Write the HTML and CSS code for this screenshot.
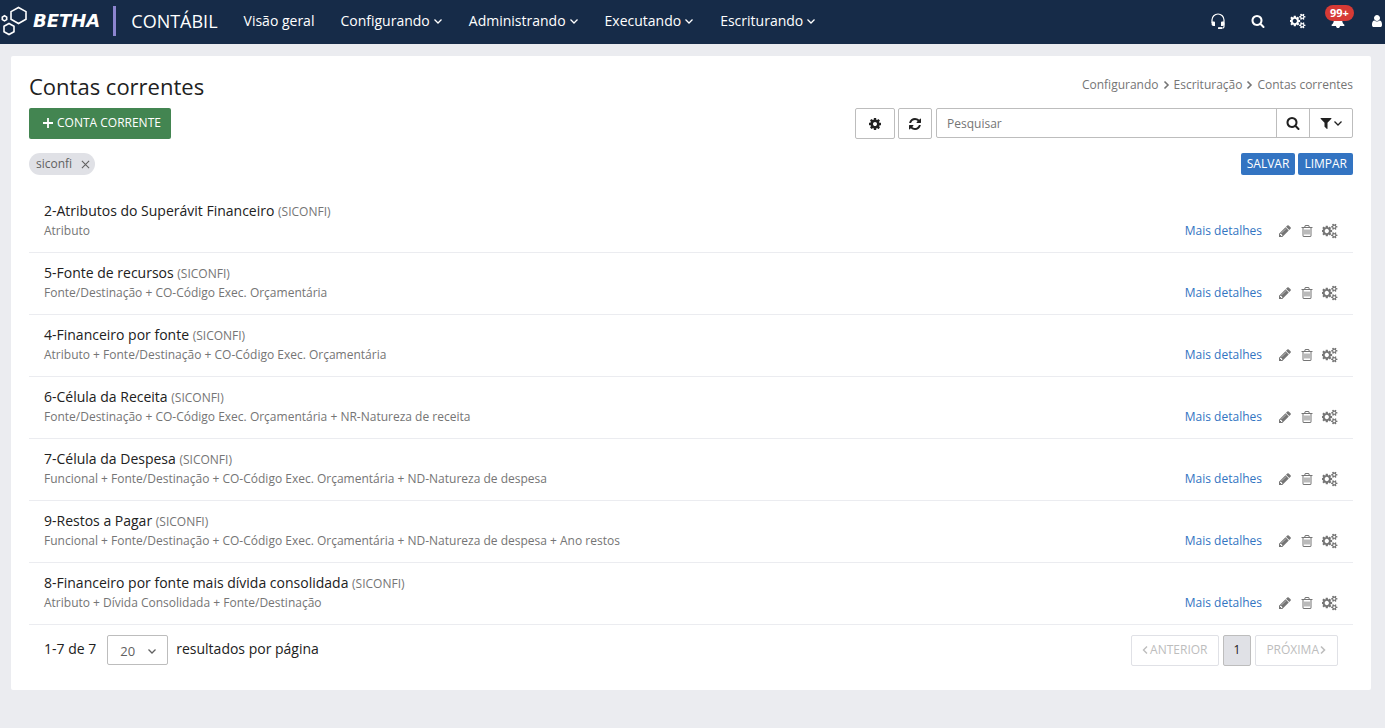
FILE: index.html
```
<!DOCTYPE html>
<html lang="pt-BR">
<head>
<meta charset="utf-8">
<meta name="viewport" content="width=device-width, initial-scale=1">
<title>Contas correntes - Contábil</title>
<link rel="stylesheet" href="styles.css">
</head>
<body>
<svg class="sprite" aria-hidden="true">
  <symbol id="search" viewBox="0 0 1792 1792"><path d="M1216 832q0-185-131.5-316.5t-316.5-131.5-316.5 131.5-131.5 316.5 131.5 316.5 316.5 131.5 316.5-131.5 131.5-316.5zm512 832q0 52-38 90t-90 38q-54 0-90-38l-343-342q-179 124-399 124-143 0-273.5-55.5t-225-150-150-225-55.5-273.5 55.5-273.5 150-225 225-150 273.5-55.5 273.5 55.5 225 150 150 225 55.5 273.5q0 220-124 399l343 343q37 37 37 90z"/></symbol>
  <symbol id="cog" viewBox="0 0 1792 1792"><path d="M1152 896q0-106-75-181t-181-75-181 75-75 181 75 181 181 75 181-75 75-181zm512-109v222q0 12-8 23t-20 13l-185 28q-19 54-39 91 35 50 107 138 10 12 10 25t-9 23q-27 37-99 108t-94 71q-12 0-26-9l-138-108q-44 23-91 38-16 136-29 186-7 28-36 28h-222q-14 0-24.5-8.5t-11.5-21.5l-28-184q-49-16-90-37l-141 107q-10 9-25 9-14 0-25-11-126-114-165-168-7-10-7-23 0-12 8-23 15-21 51-66.5t54-70.5q-27-50-41-99l-183-27q-13-2-21-12.5t-8-23.5v-222q0-12 8-23t19-13l186-28q14-46 39-92-40-57-107-138-10-12-10-24 0-10 9-23 26-36 98.5-107.5t94.5-71.5q13 0 26 10l138 107q44-23 91-38 16-136 29-186 7-28 36-28h222q14 0 24.5 8.5t11.5 21.5l28 184q49 16 90 37l142-107q9-9 24-9 13 0 25 10 129 119 165 170 7 8 7 22 0 12-8 23-15 21-51 66.5t-54 70.5q26 50 41 98l183 28q13 2 21 12.5t8 23.5z"/></symbol>
  <symbol id="refresh" viewBox="0 0 1792 1792"><path d="M1639 1056q0 5-1 7-64 268-268 434.5t-478 166.5q-146 0-282.5-55t-243.5-157l-129 129q-19 19-45 19t-45-19-19-45v-448q0-26 19-45t45-19h448q26 0 45 19t19 45-19 45l-137 137q71 66 161 102t187 36q134 0 250-65t186-179q11-17 53-117 8-23 30-23h192q13 0 22.5 9.5t9.5 22.5zm25-800v448q0 26-19 45t-45 19h-448q-26 0-45-19t-19-45 19-45l138-138q-148-137-349-137-134 0-250 65t-186 179q-11 17-53 117-8 23-30 23h-199q-13 0-22.5-9.5t-9.5-22.5v-7q65-268 270-434.5t480-166.5q146 0 284 55.5t245 156.5l130-129q19-19 45-19t45 19 19 45z"/></symbol>
  <symbol id="pencil" viewBox="0 0 1792 1792"><path d="M491 1536l91-91-235-235-91 91v107h128v128h107zm523-928q0-22-22-22-10 0-17 7l-542 542q-7 7-7 17 0 22 22 22 10 0 17-7l542-542q7-7 7-17zm-54-192l416 416-832 832h-416v-416zm683 96q0 53-37 90l-166 166-416-416 166-165q36-38 90-38 53 0 91 38l235 234q37 39 37 91z"/></symbol>
  <symbol id="filter" viewBox="0 0 1792 1792"><path d="M1595 295q17 41-14 70l-493 493v742q0 42-39 59-13 5-25 5-27 0-45-19l-256-256q-19-19-19-45v-486l-493-493q-31-29-14-70 17-39 59-39h1280q42 0 59 39z"/></symbol>
  <symbol id="user" viewBox="0 0 1792 1792"><path d="M1536 1399q0 109-62.5 187t-150.5 78h-854q-88 0-150.5-78t-62.5-187q0-85 8.5-160.5t31.5-152 58.5-131 94-89 134.5-34.5q131 128 313 128t313-128q76 0 134.5 34.5t94 89 58.5 131 31.5 152 8.5 160.5zm-256-887q0 159-112.5 271.5t-271.5 112.5-271.5-112.5-112.5-271.5 112.5-271.5 271.5-112.5 271.5 112.5 112.5 271.5z"/></symbol>
  <symbol id="bell" viewBox="0 0 1792 1792"><path d="M1728 1408q0 52-38 90t-90 38h-448q0 106-75 181t-181 75-181-75-75-181h-448q-52 0-90-38t-38-90q50-42 91-88t85-119.5 74.5-158.5 50-206 19.5-260q0-152 117-282.5t307-158.5q-8-19-8-39 0-40 28-68t68-28 68 28 28 68q0 20-8 39 190 28 307 158.5t117 282.5q0 139 19.5 260t50 206 74.5 158.5 85 119.5 91 88z"/></symbol>
  <symbol id="trash" viewBox="0 0 1792 1792"><path d="M704 736v576q0 14-9 23t-23 9h-64q-14 0-23-9t-9-23v-576q0-14 9-23t23-9h64q14 0 23 9t9 23zm256 0v576q0 14-9 23t-23 9h-64q-14 0-23-9t-9-23v-576q0-14 9-23t23-9h64q14 0 23 9t9 23zm256 0v576q0 14-9 23t-23 9h-64q-14 0-23-9t-9-23v-576q0-14 9-23t23-9h64q14 0 23 9t9 23zm128 724v-948h-896v948q0 22 7 40.5t14.5 27 10.5 8.5h832q3 0 10.5-8.5t14.5-27 7-40.5zm-672-1076h448l-48-117q-7-9-17-11h-317q-10 2-17 11zm928 32v64q0 14-9 23t-23 9h-96v948q0 83-47 143.5t-113 60.5h-832q-66 0-113-58.5t-47-141.5v-952h-96q-14 0-23-9t-9-23v-64q0-14 9-23t23-9h309l70-167q15-37 54-63t79-26h320q40 0 79 26t54 63l70 167h309q14 0 23 9t9 23z"/></symbol>
  <symbol id="cogs" viewBox="0 0 1920 1792"><path d="M832 896q0-106-75-181t-181-75-181 75-75 181 75 181 181 75 181-75 75-181zm768 512q0-52-38-90t-90-38-90 38-38 90q0 53 37.5 90.5t90.5 37.5 90.5-37.5 37.5-90.5zm0-1024q0-52-38-90t-90-38-90 38-38 90q0 53 37.5 90.5t90.5 37.5 90.5-37.5 37.5-90.5zm-384 421v185q0 10-7 19.5t-16 10.5l-155 24q-11 35-32 76 34 48 90 115 7 11 7 20 0 12-7 19-23 30-82.5 89.5t-78.5 59.5q-11 0-21-7l-115-90q-37 19-77 31-11 108-23 155-7 24-30 24h-186q-11 0-20-7.5t-10-17.5l-23-153q-34-10-75-31l-118 89q-7 7-20 7-11 0-21-8-144-133-144-160 0-9 7-19 10-14 41-53t47-61q-23-44-35-82l-152-24q-10-1-17-9.5t-7-19.5v-185q0-10 7-19.5t16-10.5l155-24q11-35 32-76-34-48-90-115-7-11-7-20 0-12 7-20 22-30 82-89t79-59q11 0 21 7l115 90q34-18 77-32 11-108 23-154 7-24 30-24h186q11 0 20 7.5t10 17.5l23 153q34 10 75 31l118-89q8-7 20-7 11 0 21 8 144 133 144 160 0 8-7 19-12 16-42 54t-45 60q23 48 34 82l152 23q10 2 17 10.5t7 19.5zm640 533v140q0 16-149 31-12 27-30 52 51 113 51 138 0 4-4 7-122 71-124 71-8 0-46-47t-52-68q-20 2-30 2t-30-2q-14 21-52 68t-46 47q-2 0-124-71-4-3-4-7 0-25 51-138-18-25-30-52-149-15-149-31v-140q0-16 149-31 13-29 30-52-51-113-51-138 0-4 4-7 4-2 35-20t59-34 30-16q8 0 46 46.5t52 67.5q20-2 30-2t30 2q51-71 92-112l6-2q4 0 124 70 4 3 4 7 0 25-51 138 17 23 30 52 149 15 149 31zm0-1024v140q0 16-149 31-12 27-30 52 51 113 51 138 0 4-4 7-122 71-124 71-8 0-46-47t-52-68q-20 2-30 2t-30-2q-14 21-52 68t-46 47q-2 0-124-71-4-3-4-7 0-25 51-138-18-25-30-52-149-15-149-31v-140q0-16 149-31 13-29 30-52-51-113-51-138 0-4 4-7 4-2 35-20t59-34 30-16q8 0 46 46.5t52 67.5q20-2 30-2t30 2q51-71 92-112l6-2q4 0 124 70 4 3 4 7 0 25-51 138 17 23 30 52 149 15 149 31z"/></symbol>
  <symbol id="headset" viewBox="0 0 16 16"><path d="M2 10V7a6 6 0 0 1 12 0V13.500a1.500 1.500 0 0 1-1.500 1.500H9" fill="none" stroke="currentColor" stroke-width="1.200"/><path d="M2 8.500h2a1 1 0 0 1 1 1V13H3.500A2 2 0 0 1 1.500 11zM14 8.500h-2a1 1 0 0 0-1 1V13h1.500a2 2 0 0 0 2-2zM8 14.200h4V16H8.500a.5.5 0 0 1-.5-.5z"/></symbol>
  <symbol id="down" viewBox="0 0 10 10"><path d="M1.500 3.500 5 7l3.500-3.500" fill="none" stroke="currentColor" stroke-width="1.300"/></symbol>
  <symbol id="right" viewBox="0 0 8 10"><path d="M2 1.500 5.500 5 2 8.500" fill="none" stroke="currentColor" stroke-width="1.600"/></symbol>
  <symbol id="left" viewBox="0 0 8 10"><path d="M5 1.500 1.500 5 5 8.500" fill="none" stroke="currentColor" stroke-width="1.400"/></symbol>
  <symbol id="plus" viewBox="0 0 10 10"><path d="M5 0v10M0 5h10" fill="none" stroke="currentColor" stroke-width="1.800"/></symbol>
  <symbol id="close" viewBox="0 0 10 10"><path d="m1 1 8 8M9 1 1 9" fill="none" stroke="currentColor" stroke-width="1.200"/></symbol>
</svg>

<header class="topbar">
  <a class="brand" href="#">
    <svg class="brand-mark" viewBox="0 0 28 30" aria-hidden="true">
      <path d="M18.500 1.500 26 5.600v7.600l-7.500 4.300-7.500-4.300V5.600z"/>
      <path d="m9 17.500 5 2.700v5.600l-5 2.700-5-2.700v-5.600z"/>
      <path d="m4.500 9.800 2.200 1.300v2.500l-2.200 1.300-2.200-1.300v-2.500z"/>
    </svg>
    <span class="brand-name">BETHA</span>
  </a>
  <span class="product">CONTÁBIL</span>
  <nav class="menu">
    <a href="#">Visão geral</a>
    <a href="#">Configurando<svg class="caret"><use href="#down"/></svg></a>
    <a href="#">Administrando<svg class="caret"><use href="#down"/></svg></a>
    <a href="#">Executando<svg class="caret"><use href="#down"/></svg></a>
    <a href="#">Escriturando<svg class="caret"><use href="#down"/></svg></a>
  </nav>
  <div class="tools">
    <button type="button" aria-label="Suporte"><svg class="icon-lg"><use href="#headset"/></svg></button>
    <button type="button" aria-label="Buscar"><svg class="icon"><use href="#search"/></svg></button>
    <button type="button" aria-label="Utilitários"><svg class="icon-lg"><use href="#cogs"/></svg></button>
    <button type="button" aria-label="Notificações"><svg class="icon"><use href="#bell"/></svg><span class="badge">99+</span></button>
    <button type="button" aria-label="Usuário"><svg class="icon"><use href="#user"/></svg></button>
  </div>
</header>

<main class="card">
  <div class="heading">
    <h1>Contas correntes</h1>
    <nav class="crumbs" aria-label="Trilha">
      <span>Configurando</span><svg class="sep"><use href="#right"/></svg><span>Escrituração</span><svg class="sep"><use href="#right"/></svg><span>Contas correntes</span>
    </nav>
  </div>

  <div class="toolbar">
    <button type="button" class="btn-new"><svg class="plus"><use href="#plus"/></svg>CONTA CORRENTE</button>
    <div class="actions">
      <button type="button" class="btn-box wide" aria-label="Configurar"><svg class="icon"><use href="#cog"/></svg></button>
      <button type="button" class="btn-box" aria-label="Atualizar"><svg class="icon"><use href="#refresh"/></svg></button>
      <form class="search">
        <input type="text" placeholder="Pesquisar" aria-label="Pesquisar">
        <button type="button" aria-label="Pesquisar"><svg class="icon"><use href="#search"/></svg></button>
        <button type="button" class="filter" aria-label="Filtros"><svg class="icon"><use href="#filter"/></svg><svg class="caret"><use href="#down"/></svg></button>
      </form>
    </div>
  </div>

  <div class="filters">
    <span class="chip">siconfi<button type="button" aria-label="Remover siconfi"><svg><use href="#close"/></svg></button></span>
    <div class="filter-actions">
      <button type="button">SALVAR</button>
      <button type="button">LIMPAR</button>
    </div>
  </div>

  <ul class="list">
    <li>
      <div><h2>2-Atributos do Superávit Financeiro <small>(SICONFI)</small></h2><p>Atributo</p></div>
      <div class="row-actions"><a href="#">Mais detalhes</a><button type="button" aria-label="Editar"><svg class="icon"><use href="#pencil"/></svg></button><button type="button" aria-label="Excluir"><svg class="icon"><use href="#trash"/></svg></button><button type="button" aria-label="Opções"><svg class="icon-lg"><use href="#cogs"/></svg></button></div>
    </li>
    <li>
      <div><h2>5-Fonte de recursos <small>(SICONFI)</small></h2><p>Fonte/Destinação + CO-Código Exec. Orçamentária</p></div>
      <div class="row-actions"><a href="#">Mais detalhes</a><button type="button" aria-label="Editar"><svg class="icon"><use href="#pencil"/></svg></button><button type="button" aria-label="Excluir"><svg class="icon"><use href="#trash"/></svg></button><button type="button" aria-label="Opções"><svg class="icon-lg"><use href="#cogs"/></svg></button></div>
    </li>
    <li>
      <div><h2>4-Financeiro por fonte <small>(SICONFI)</small></h2><p>Atributo + Fonte/Destinação + CO-Código Exec. Orçamentária</p></div>
      <div class="row-actions"><a href="#">Mais detalhes</a><button type="button" aria-label="Editar"><svg class="icon"><use href="#pencil"/></svg></button><button type="button" aria-label="Excluir"><svg class="icon"><use href="#trash"/></svg></button><button type="button" aria-label="Opções"><svg class="icon-lg"><use href="#cogs"/></svg></button></div>
    </li>
    <li>
      <div><h2>6-Célula da Receita <small>(SICONFI)</small></h2><p>Fonte/Destinação + CO-Código Exec. Orçamentária + NR-Natureza de receita</p></div>
      <div class="row-actions"><a href="#">Mais detalhes</a><button type="button" aria-label="Editar"><svg class="icon"><use href="#pencil"/></svg></button><button type="button" aria-label="Excluir"><svg class="icon"><use href="#trash"/></svg></button><button type="button" aria-label="Opções"><svg class="icon-lg"><use href="#cogs"/></svg></button></div>
    </li>
    <li>
      <div><h2>7-Célula da Despesa <small>(SICONFI)</small></h2><p>Funcional + Fonte/Destinação + CO-Código Exec. Orçamentária + ND-Natureza de despesa</p></div>
      <div class="row-actions"><a href="#">Mais detalhes</a><button type="button" aria-label="Editar"><svg class="icon"><use href="#pencil"/></svg></button><button type="button" aria-label="Excluir"><svg class="icon"><use href="#trash"/></svg></button><button type="button" aria-label="Opções"><svg class="icon-lg"><use href="#cogs"/></svg></button></div>
    </li>
    <li>
      <div><h2>9-Restos a Pagar <small>(SICONFI)</small></h2><p>Funcional + Fonte/Destinação + CO-Código Exec. Orçamentária + ND-Natureza de despesa + Ano restos</p></div>
      <div class="row-actions"><a href="#">Mais detalhes</a><button type="button" aria-label="Editar"><svg class="icon"><use href="#pencil"/></svg></button><button type="button" aria-label="Excluir"><svg class="icon"><use href="#trash"/></svg></button><button type="button" aria-label="Opções"><svg class="icon-lg"><use href="#cogs"/></svg></button></div>
    </li>
    <li>
      <div><h2>8-Financeiro por fonte mais dívida consolidada <small>(SICONFI)</small></h2><p>Atributo + Dívida Consolidada + Fonte/Destinação</p></div>
      <div class="row-actions"><a href="#">Mais detalhes</a><button type="button" aria-label="Editar"><svg class="icon"><use href="#pencil"/></svg></button><button type="button" aria-label="Excluir"><svg class="icon"><use href="#trash"/></svg></button><button type="button" aria-label="Opções"><svg class="icon-lg"><use href="#cogs"/></svg></button></div>
    </li>
  </ul>

  <footer class="paging">
    <div class="page-size">
      <span>1-7 de 7</span>
      <span class="select"><select id="size"><option>20</option><option>50</option></select><svg class="caret"><use href="#down"/></svg></span>
      <label for="size">resultados por página</label>
    </div>
    <div class="pages">
      <button type="button" disabled><svg class="sep"><use href="#left"/></svg>ANTERIOR</button>
      <button type="button" class="current">1</button>
      <button type="button" disabled>PRÓXIMA<svg class="sep"><use href="#right"/></svg></button>
    </div>
  </footer>
</main>
</body>
</html>
```
FILE: styles.css
```
* { box-sizing: border-box; }

body {
  margin: 0;
  background: #ebecf0;
  color: #212121;
  font: 14px/20px "Open Sans", sans-serif;
}

a { color: inherit; text-decoration: none; }
h1, h2, p, ul { margin: 0; padding: 0; font-weight: 400; }
button, input, select { margin: 0; font: inherit; color: inherit; }
button { padding: 0; border: 0; background: none; cursor: pointer; }
svg { display: block; flex: none; fill: currentColor; }

.sprite { position: absolute; width: 0; height: 0; }
.icon { width: 14px; height: 14px; }
.icon-lg { width: 16px; height: 16px; }
.caret { width: 10px; height: 10px; }
.sep { width: 8px; height: 10px; }

.topbar {
  display: flex;
  align-items: center;
  height: 44px;
  padding-bottom: 2px;
  background: #162b48;
  color: #fff;
}

.brand {
  display: flex;
  align-items: center;
  gap: 5px;
  padding-right: 13px;
  border-right: 3px solid #8c85cf;
}
.brand-mark { width: 28px; height: 30px; fill: none; stroke: #fff; stroke-width: 1.6; }
.brand-name { font-family: "DejaVu Sans", sans-serif; font-size: 18px; font-weight: 700; font-style: italic; line-height: 30px; }
.product { margin: 0 26px 0 15px; font-size: 18px; }

.menu { display: flex; gap: 26px; }
.menu a { display: flex; align-items: center; gap: 3px; }

.tools { display: flex; align-items: center; gap: 25px; margin-left: auto; padding-right: 1px; }
.tools button { position: relative; display: grid; place-items: center; }
.badge {
  position: absolute;
  top: -9px;
  left: -6px;
  padding: 0 5px;
  border-radius: 8px;
  background: #d63a35;
  font-size: 11px;
  font-weight: 700;
  line-height: 16px;
}

.card {
  margin: 12px 14px 12px 11px;
  padding: 15px 18px 24px;
  border-radius: 2px;
  background: #fff;
}

.heading { display: flex; justify-content: space-between; align-items: flex-start; }
h1 { font-size: 22px; line-height: 30px; }
.crumbs { display: flex; align-items: center; gap: 3px; padding-top: 4px; color: #757575; font-size: 12px; }
.crumbs .sep { width: 9px; }

.toolbar { display: flex; justify-content: space-between; padding-top: 7px; }
.btn-new {
  display: flex;
  align-items: center;
  gap: 4px;
  height: 31px;
  padding: 0 10px 2px 14px;
  border-radius: 2px;
  background: #438551;
  color: #fff;
  font-size: 12px;
}
.plus { width: 10px; height: 10px; }
.actions { display: flex; gap: 3px; width: 498px; }
.btn-box { display: grid; place-items: center; width: 34px; height: 31px; border: 1px solid #bdbdbd; border-radius: 2px; }
.btn-box.wide { width: 40px; }
.search { display: flex; flex: 1; height: 30px; margin-left: 1px; border: 1px solid #bdbdbd; border-radius: 2px; }
.search input { flex: 1; min-width: 0; padding: 2px 10px 0; border: 0; background: none; font-size: 12px; outline: 0; }
.search input::placeholder { color: #757575; opacity: 1; }
.search button { display: flex; align-items: center; justify-content: center; width: 33px; border-left: 1px solid #bdbdbd; }
.search .filter { width: 43px; }

.filters { display: flex; justify-content: space-between; align-items: center; padding: 14px 0 16px; font-size: 12px; }
.chip { display: flex; align-items: center; gap: 9px; height: 22px; padding: 0 5px 0 7px; border-radius: 11px; background: #e0e1e6; color: #616161; }
.chip svg { width: 9px; height: 9px; }
.filter-actions { display: flex; gap: 3px; }
.filter-actions button { height: 22px; padding: 0 6px; border-radius: 2px; background: #3374c2; color: #fff; }

.list { list-style: none; }
.list li {
  display: flex;
  justify-content: space-between;
  align-items: flex-end;
  padding: 10px 15px 11px;
  border-bottom: 1px solid #ebecf0;
}
h2 { font-size: 14px; line-height: 20px; }
small { color: #757575; font-size: 12px; line-height: 12px; }
.list p { color: #757575; font-size: 12px; }
.row-actions { display: flex; align-items: center; gap: 8px; color: #757575; font-size: 12px; }
.row-actions a { margin-right: 8px; color: #3374c2; }

.paging { display: flex; justify-content: space-between; align-items: flex-start; padding: 10px 15px 0; }
.page-size { display: flex; }
.page-size > span:first-child { margin-right: 11px; padding-top: 4px; }
.page-size label { margin-left: 8px; padding-top: 4px; }
.select { position: relative; }
.select select {
  display: block;
  width: 61px;
  height: 30px;
  padding: 2px 12px 0;
  border: 1px solid #bdbdbd;
  border-radius: 2px;
  appearance: none;
  background: #fff;
  color: #616161;
  font-size: 13px;
}
.select .caret { position: absolute; top: 11px; right: 11px; color: #616161; pointer-events: none; }
.pages { display: flex; gap: 4px; font-size: 12px; }
.pages button { display: flex; align-items: center; height: 31px; padding: 0 10px 2px; border: 1px solid #e0e1e6; border-radius: 2px; color: #bdbdbd; }
.pages .current { border-color: #bdbdbd; background: #e0e1e6; color: #212121; }
```
